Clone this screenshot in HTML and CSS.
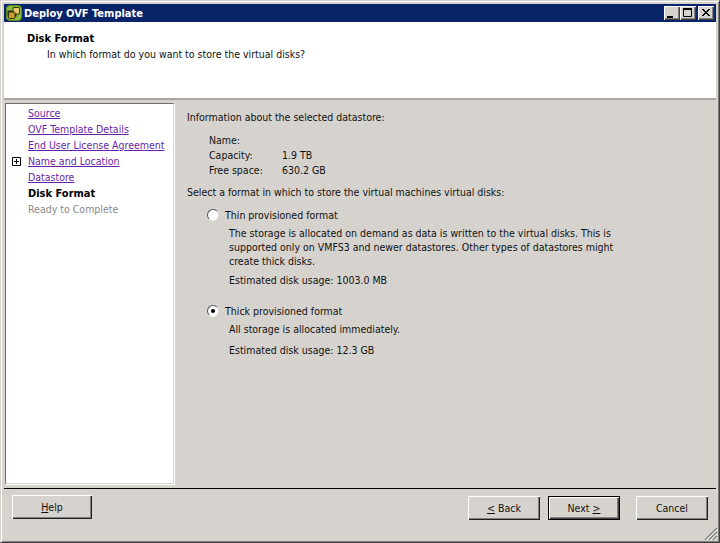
FILE: index.html
```html
<!DOCTYPE html>
<html lang="en">
<head>
<meta charset="utf-8">
<title>Deploy OVF Template</title>
<link rel="stylesheet" href="styles.css">
</head>
<body>
<div class="window">
  <header class="titlebar">
    <svg class="app-icon" width="18" height="18" viewBox="0 0 18 18">
      <rect x="1.5" y="1.5" width="15" height="15" rx="3.5" fill="#8dbb3c" stroke="#5c8a20"/>
      <path d="M8.5 3.5h6v6h-3v3h-3v-3h-3v3h-3v-6h6z" fill="#1f2a10"/>
      <rect x="8" y="3.5" width="6.5" height="6.5" rx="1" fill="#e8c860" stroke="#2a3414"/>
      <rect x="3.5" y="8" width="6.5" height="6.5" rx="1" fill="#d09a2c" stroke="#2a3414"/>
    </svg>
    <span class="title">Deploy OVF Template</span>
    <div class="controls">
      <button class="ctl"><svg width="16" height="14" viewBox="0 0 16 14"><rect x="3" y="10" width="6" height="2" fill="#000"/></svg></button>
      <button class="ctl"><svg width="16" height="14" viewBox="0 0 16 14"><path d="M3.5 2.5h8v8h-8z" fill="none" stroke="#000"/><rect x="3" y="2" width="9" height="2" fill="#000"/></svg></button>
      <button class="ctl ctl-close"><svg width="16" height="14" viewBox="0 0 16 14"><path d="M4 3l7 7M5 3l7 7M11 3l-7 7M12 3l-7 7" stroke="#000" fill="none"/></svg></button>
    </div>
  </header>
  <section class="banner">
    <h1 class="banner-title">Disk Format</h1>
    <p class="banner-sub">In which format do you want to store the virtual disks?</p>
  </section>
  <div class="middle">
    <nav class="steps">
      <a class="step link">Source</a>
      <a class="step link">OVF Template Details</a>
      <a class="step link">End User License Agreement</a>
      <div class="step-row">
        <svg class="expander" width="9" height="9" viewBox="0 0 9 9"><path d="M.5.5h8v8h-8z M2 4.5h5 M4.5 2v5" fill="none" stroke="#000"/></svg>
        <a class="step link">Name and Location</a>
      </div>
      <a class="step link">Datastore</a>
      <span class="step current">Disk Format</span>
      <span class="step disabled">Ready to Complete</span>
    </nav>
    <main class="content">
      <p class="line">Information about the selected datastore:</p>
      <dl class="info">
        <dt>Name:</dt><dd></dd>
        <dt>Capacity:</dt><dd>1.9 TB</dd>
        <dt>Free space:</dt><dd>630.2 GB</dd>
      </dl>
      <p class="line">Select a format in which to store the virtual machines virtual disks:</p>
      <div class="option option-thin">
        <div class="radio-row"><span class="radio"></span><span>Thin provisioned format</span></div>
        <p class="desc">The storage is allocated on demand as data is written to the virtual disks. This is<br>supported only on VMFS3 and newer datastores. Other types of datastores might<br>create thick disks.</p>
        <p class="usage">Estimated disk usage: 1003.0 MB</p>
      </div>
      <div class="option option-thick">
        <div class="radio-row"><span class="radio checked"></span><span>Thick provisioned format</span></div>
        <p class="desc">All storage is allocated immediately.</p>
        <p class="usage">Estimated disk usage: 12.3 GB</p>
      </div>
    </main>
  </div>
  <footer class="footer">
    <button class="btn help"><span><u>H</u>elp</span></button>
    <div class="nav-btns">
      <button class="btn"><span><u>&lt;</u> Back</span></button>
      <button class="btn default"><span>Next <u>&gt;</u></span></button>
      <button class="btn cancel"><span>Cancel</span></button>
    </div>
    <svg class="grip" width="15" height="15" viewBox="0 0 15 15"><path d="M14 2L2 14M14 6L6 14M14 10L10 14" stroke="#77776f" stroke-width="1.3" fill="none"/><path d="M14 3.4L3.4 14M14 7.4L7.4 14M14 11.4L11.4 14" stroke="#fff" stroke-width=".8" fill="none"/></svg>
  </footer>
</div>
</body>
</html>
```
FILE: styles.css
```css
* { box-sizing: border-box; }
html, body { margin: 0; padding: 0; }
body {
  width: 720px;
  height: 543px;
  overflow: hidden;
  font-family: "DejaVu Sans Condensed", "DejaVu Sans", sans-serif;
  font-stretch: condensed;
  font-size: 10.5px;
  color: #111;
  background: #d6d3ce;
}
p { margin: 0; }
.window {
  position: relative;
  width: 720px;
  height: 543px;
  display: flex;
  flex-direction: column;
  padding: 3px 3px 0 3px;
  background: #d6d3ce;
  border: 1px solid #404040;
  border-color: #d6d3ce #404040 #404040 #d6d3ce;
  box-shadow: inset 1px 1px 0 #fff, inset -1px -1px 0 #808080;
}
.titlebar {
  height: 18px;
  flex: none;
  display: flex;
  align-items: center;
  background: #0a246a;
  color: #fff;
  font-weight: bold;
  font-size: 11px;
}
.app-icon { margin-left: 1px; margin-right: 1px; flex: none; }
.title { flex: 1; }
.controls { display: flex; margin-right: 2px; }
.ctl {
  width: 16px;
  height: 14px;
  padding: 0;
  background: #d6d3ce;
  border: 0;
  box-shadow: inset 1px 1px 0 #fff, inset -1px -1px 0 #404040, inset -2px -2px 0 #808080;
  display: block;
}
.ctl svg { display: block; }
.ctl-close { margin-left: 2px; }
.banner {
  height: 78px;
  flex: none;
  background: #fff;
  border-bottom: 2px solid #aaa69e;
  padding: 10px 0 0 23px;
}
.banner-title {
  margin: 0;
  font-size: 11px;
  line-height: 14px;
  font-weight: bold;
  color: #000;
}
.banner-sub { margin: 1px 0 0 20px; line-height: 14px; }
.middle {
  height: 389px;
  flex: none;
  display: flex;
  padding-top: 3px;
  border-bottom: 1px solid #000;
}
.steps {
  width: 169px;
  height: 381px;
  margin-left: 1px;
  flex: none;
  display: flex;
  flex-direction: column;
  padding: 1px 0 0 22px;
  background: #fff;
  border: 1px solid #808080;
  border-color: #6f6f6a #d6d3ce #d6d3ce #6f6f6a;
  box-shadow: 1px 1px 0 #fff;
}
.step { display: block; height: 16px; line-height: 16px; white-space: nowrap; }
.link { color: #6a1fa8; text-decoration: underline; }
.current { font-weight: bold; color: #000; font-size: 11px; line-height: 18px; }
.disabled { color: #8a8a8a; }
.step-row { display: flex; align-items: center; height: 16px; margin-left: -16px; }
.expander { margin-right: 7px; flex: none; }
.content { flex: 1; padding: 6px 0 0 13px; }
.line { height: 16px; line-height: 16px; }
.info {
  display: grid;
  grid-template-columns: 73px 1fr;
  grid-auto-rows: 15px;
  margin: 8px 0 6px 22px;
  line-height: 15px;
}
.info dt, .info dd { margin: 0; }
.option { margin-left: 20px; }
.option-thin { margin-top: 7px; }
.option-thick { margin-top: 16px; }
.radio-row { display: flex; align-items: center; gap: 6px; height: 16px; }
.radio {
  width: 12px;
  height: 12px;
  flex: none;
  border-radius: 50%;
  background: #fff;
  border: 1px solid;
  border-color: #555 #ddd #eee #555;
  display: flex;
  align-items: center;
  justify-content: center;
}
.radio.checked::after {
  content: "";
  width: 4px;
  height: 4px;
  border-radius: 50%;
  background: #000;
}
.desc { margin: 3px 0 0 22px; line-height: 14px; white-space: nowrap; }
.usage { margin: 7px 0 0 22px; line-height: 14px; }
.option-thin .usage { margin-top: 5px; }
.footer {
  flex: 1;
  display: flex;
  justify-content: space-between;
  padding: 6px 8px 0 8px;
}
.nav-btns { display: flex; }
.btn {
  width: 72px;
  height: 24px;
  padding: 0;
  font: inherit;
  color: #111;
  background: #d6d3ce;
  border: 0;
  box-shadow: inset 1px 1px 0 #fff, inset -1px -1px 0 #202020, inset -2px -2px 0 #808080;
}
.help { width: 80px; }
.nav-btns .btn { margin-top: 1px; }
.default { margin-left: 8px; box-shadow: inset 0 0 0 1px #000, inset 2px 2px 0 #fff, inset -2px -2px 0 #404040, inset -3px -3px 0 #808080; }
.cancel { margin-left: 16px; }
.grip { position: absolute; right: 1px; bottom: 1px; }
```
